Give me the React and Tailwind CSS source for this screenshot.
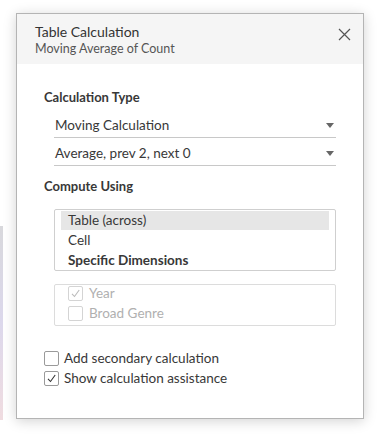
import React from "react";

function Caret() {
  return (
    <svg width="8" height="5" viewBox="0 0 8 5" className="shrink-0">
      <path d="M0 0 L8 0 L4 5 Z" fill="#666" />
    </svg>
  );
}

function Check({ color }) {
  return (
    <svg width="11" height="11" viewBox="0 0 11 11">
      <path d="M2 5.8 L4.5 8.5 L9.2 2" fill="none" stroke={color} strokeWidth="1.1" />
    </svg>
  );
}

function Box({ checked, disabled }) {
  return (
    <div
      className={
        "w-[15px] h-[15px] border rounded-[2px] flex items-center justify-center bg-white shrink-0 " +
        (disabled ? "border-[#d4d4d4]" : "border-[#9a9a9a]")
      }
    >
      {checked && <Check color={disabled ? "#bbb" : "#333"} />}
    </div>
  );
}

export default function App() {
  return (
    <div
      className="w-[379px] h-[435px] bg-white relative overflow-hidden"
      style={{ fontFamily: "Lato, 'Noto Sans', sans-serif" }}
    >
      <div className="absolute left-0 top-[226px] w-[3px] h-[194px] bg-gradient-to-b from-[#d8d8dc] via-[#dcd8ec] to-[#f0dce0]" />
      <div className="absolute left-[16px] top-[13px] w-[348px] h-[406px] border border-[#b4b4b4] bg-white shadow-[0_2px_12px_rgba(0,0,0,0.18)] flex flex-col">
        <div className="bg-[#f5f5f5] h-[50px] flex justify-between pl-[18px] pr-[12px] pt-[9px]">
          <div className="flex flex-col text-[#333]">
            <div className="text-[14px] leading-[18px]">Table Calculation</div>
            <div className="text-[12.5px] leading-[16px] text-[#555]">Moving Average of Count</div>
          </div>
          <svg width="13" height="13" viewBox="0 0 13 13" className="mt-[5px]">
            <path d="M1 1 L12 12 M12 1 L1 12" stroke="#555" strokeWidth="1.2" />
          </svg>
        </div>
        <div className="flex flex-col pl-[27px] pr-[27px] pt-[25px] text-[#383838]">
          <div className="text-[13px] font-bold leading-[16px]">Calculation Type</div>
          <div className="ml-[10px] mt-[9px] h-[24px] border-b border-[#c8c8c8] flex items-center justify-between pl-[1px] pr-[2px] text-[13.5px]">
            <span>Moving Calculation</span>
            <Caret />
          </div>
          <div className="ml-[10px] mt-[4px] h-[24px] border-b border-[#c8c8c8] flex items-center justify-between pl-[1px] pr-[2px] text-[13.5px]">
            <span>Average, prev 2, next 0</span>
            <Caret />
          </div>
          <div className="text-[13px] font-bold leading-[16px] mt-[12px]">Compute Using</div>
          <div className="ml-[10px] mt-[15px] h-[62px] border border-[#cfcfcf] rounded-[2px] px-[6px] pt-[1px] text-[13.5px]">
            <div className="h-[19px] bg-[#e6e6e6] flex items-center pl-[7px]">Table (across)</div>
            <div className="h-[20px] flex items-center pl-[7px]">Cell</div>
            <div className="h-[20px] flex items-center pl-[7px] font-bold">Specific Dimensions</div>
          </div>
          <div className="ml-[10px] mt-[13px] h-[42px] border border-[#dcdcdc] rounded-[2px] pl-[13px] pt-[1px] flex flex-col gap-[5px] text-[13.5px] text-[#b0b0b0]">
            <div className="flex items-center gap-[6px] h-[15px]">
              <Box checked disabled />
              <span>Year</span>
            </div>
            <div className="flex items-center gap-[6px] h-[15px]">
              <Box disabled />
              <span>Broad Genre</span>
            </div>
          </div>
          <div className="mt-[25px] flex flex-col gap-[5px] text-[13.5px]">
            <div className="flex items-center gap-[5px] h-[15px]">
              <Box />
              <span>Add secondary calculation</span>
            </div>
            <div className="flex items-center gap-[5px] h-[15px]">
              <Box checked />
              <span>Show calculation assistance</span>
            </div>
          </div>
        </div>
      </div>
    </div>
  );
}
